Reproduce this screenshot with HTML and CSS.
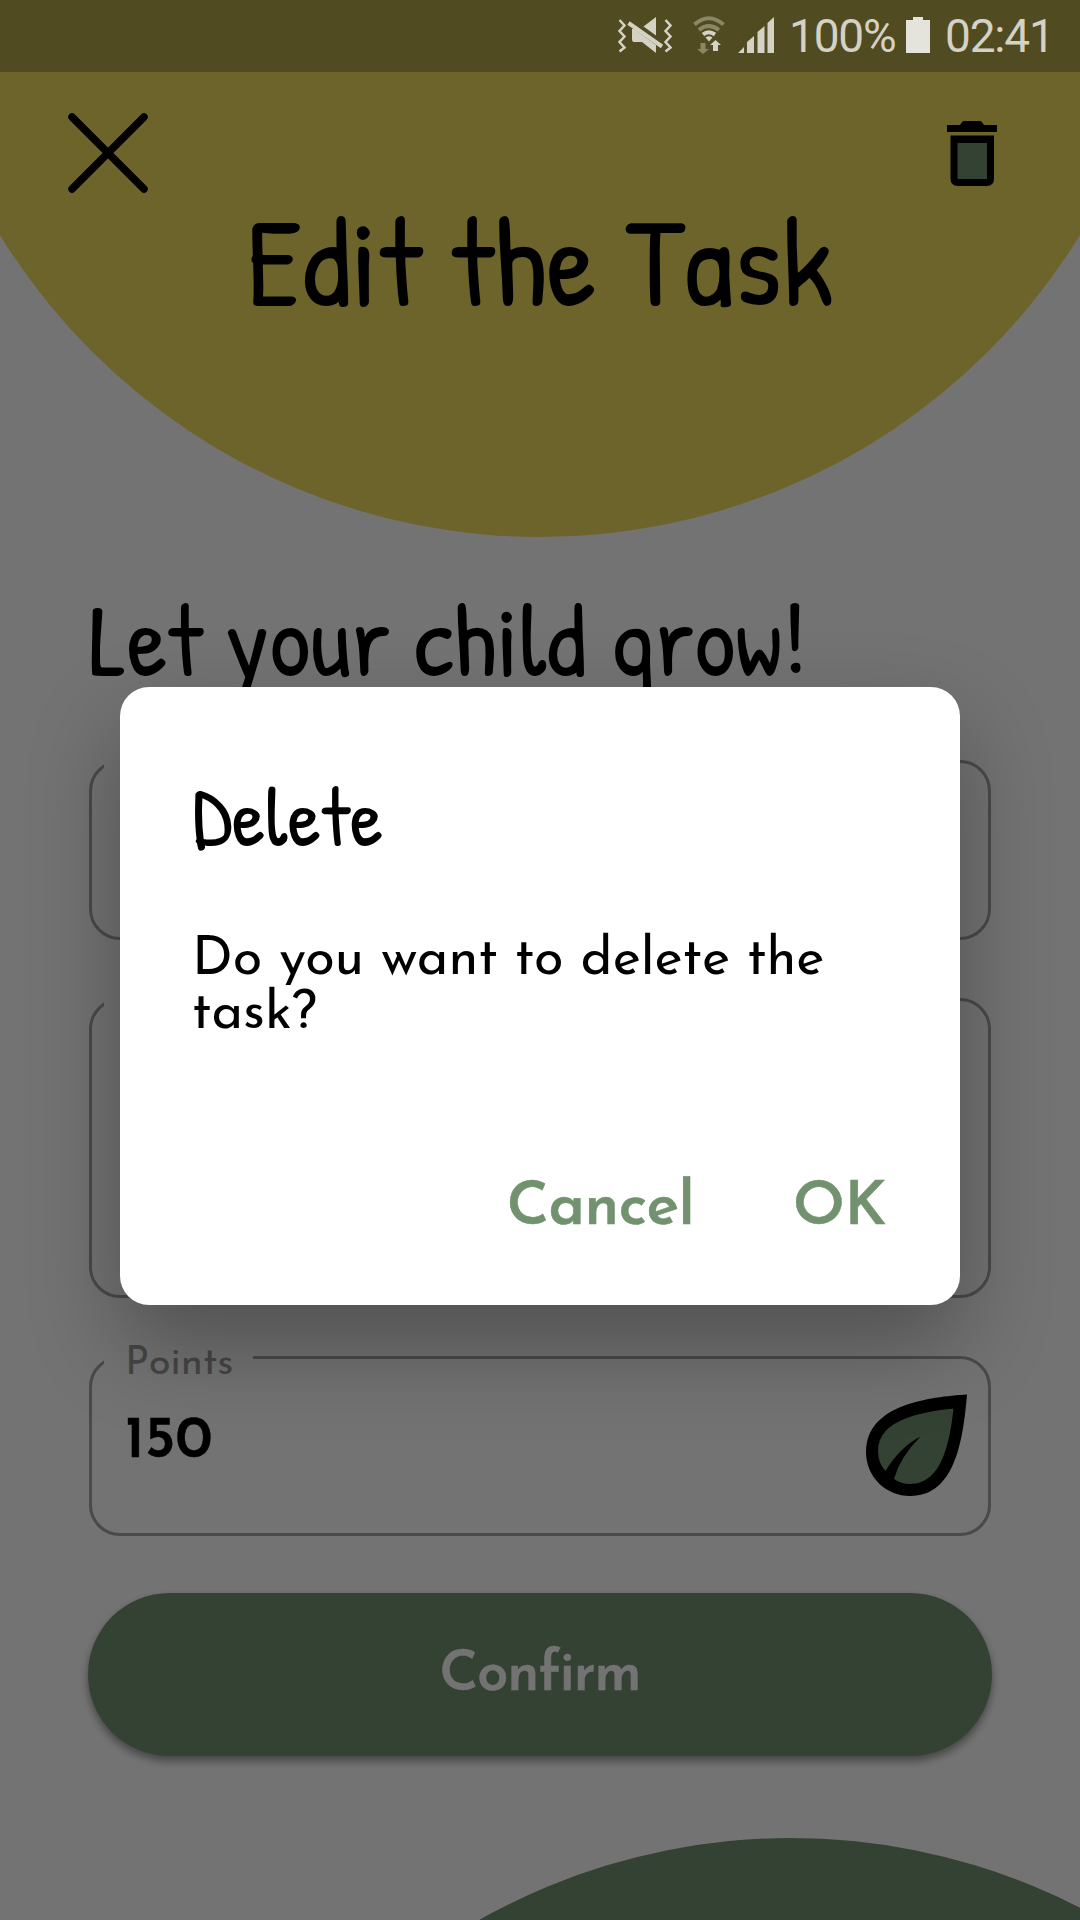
FILE: index.html
```html
<!DOCTYPE html>
<html lang="en">
<head>
<meta charset="utf-8">
<title>Edit the Task</title>
<link rel="stylesheet" href="styles.css">
</head>
<body>
<div class="screen">
  <div class="circle circle-top"></div>
  <div class="circle circle-bottom"></div>

  <div class="page">
    <header class="toolbar">
      <svg class="icon-close" viewBox="0 0 80 80"><path d="M4 4 76 76M76 4 4 76"/></svg>
      <svg class="icon-trash" viewBox="0 0 50 65">
        <path d="M0 4h13l3-4h18l3 4h13v7H0z"/>
        <path d="M3.500 14.500h43.500v43q0 7.500-7.500 7.500h-28.500q-7.500 0-7.500-7.500z"/>
        <path class="leaf-green" d="M10.500 22h29.500v36H10.500z"/>
      </svg>
    </header>
    <h1 class="title">Edit the Task</h1>
    <h2 class="subtitle">Let your child grow!</h2>
    <form class="form">
      <div class="field field-name"><span class="notch"></span></div>
      <div class="field field-details"><span class="notch"></span></div>
      <div class="field field-points">
        <span class="notch"><span class="label">Points</span></span>
        <span class="value">150</span>
        <svg class="icon-leaf" viewBox="866 1394 102 102">
          <path d="M967 1394.500C930 1397 866 1404 866 1452C866 1477 886 1496 910 1496C955 1496 963 1440 967 1394.500z"/>
          <path class="leaf-green" d="M953.500 1408.500C920 1412 878 1420 878 1451Q878 1463 885.500 1471Q900 1447 920.500 1436.500Q900 1457 894 1479Q901 1484 910 1484C943 1484 950 1440 953.500 1408.500z"/>
        </svg>
      </div>
      <button class="confirm" type="button">Confirm</button>
    </form>
  </div>

  <div class="scrim">
    <section class="dialog">
      <h3 class="dialog-title">Delete</h3>
      <p class="dialog-text">Do you want to delete the task?</p>
      <div class="dialog-actions">
        <span class="action action-cancel">Cancel</span>
        <span class="action action-ok">OK</span>
      </div>
    </section>
  </div>

  <div class="status">
    <svg class="icon-mute" viewBox="0 0 54 36">
      <path class="wave" d="M1.500 3l5 5.500-5 5.500 5 5.500-5 5.500 5 5.500-5 4M47.500 3l5 5.500-5 5.500 5 5.500-5 5.500 5 5.500-5 4"/>
      <path d="M38 0v18.500L25.500 9.500zM14 12h2l22 16v8L24 25h-8q-2 0-2-3z"/>
      <path class="slash" d="M10.500 6 44 29.500"/>
    </svg>
    <svg class="icon-wifi" viewBox="0 0 32 38">
      <path class="arc dim" d="M1.500 8.500q14-12.500 29 0M6 14q9.500-8 20 0"/>
      <path class="arc" d="M10 18.500q5.500-4.500 12 0"/>
      <path d="M12.500 21.500q3.500-2.500 7 0L16 25.500z"/>
      <path class="dim-fill" d="M7.500 27h5v6H16l-6 5-6-5h3.500z"/>
      <path d="M20 35h5v-6h3l-5.500-5-5.500 5h3z"/>
    </svg>
    <svg class="icon-signal" viewBox="0 0 36 36"><path d="M0 36l6-6v6zM9 36V25l7-6v17zM19.500 36V15l7-6v27zM29.500 36V6l6.500-6v36z"/></svg>
    <span class="battery-level">100%</span>
    <svg class="icon-battery" viewBox="0 0 24 36"><path d="M7 0h10v3h7v33H0V3h7z"/></svg>
    <span class="clock">02:41</span>
  </div>
</div>
</body>
</html>
```

FILE: styles.css
```css
* { box-sizing: border-box; }
body { margin: 0; }
h1, h2, h3, p { margin: 0; font-weight: 400; }
svg { display: block; flex: none; }

.screen {
  position: relative;
  width: 1080px;
  height: 1920px;
  overflow: hidden;
  background: #fff;
  color: #000;
  font-family: "Josefin Sans", Lato, sans-serif;
}

.circle { position: absolute; width: 1268px; height: 1268px; border-radius: 50%; }
.circle-top { left: -94px; top: -731px; background: #f1de5f; }
.circle-bottom { left: 157px; top: 1838px; background: #739273; }

.page { position: relative; padding: 72px 89px 0; }

.toolbar { display: flex; justify-content: space-between; height: 118px; margin: 0 -6px 0 -21px; }
.icon-close { width: 80px; height: 80px; margin-top: 41px; fill: none; stroke: #000; stroke-width: 7.5; stroke-linecap: round; }
.icon-trash { width: 50px; height: 65px; margin-top: 49px; }
.leaf-green { fill: #739273; }

.title, .subtitle, .dialog-title { font-family: "Patrick Hand", Lato, sans-serif; white-space: nowrap; }
.title { text-align: center; font-size: 125.5px; line-height: 140px; }
.subtitle { margin-top: 254px; font-size: 102px; line-height: 110px; }

.form { display: flex; flex-direction: column; margin-top: 66px; }
.field { position: relative; height: 180px; border: 3px solid #a4a4a4; border-radius: 31px; }
.field-details { height: 300px; margin-top: 58px; }
.field-points { display: flex; justify-content: space-between; margin-top: 58px; padding: 50px 20px 0 33px; }
.notch { position: absolute; left: 12px; top: -4px; width: 149px; height: 20px; background: #fff; }
.label { position: absolute; left: 21px; top: -16px; color: #9b9b9b; font-size: 40px; line-height: 50px; }
.value { font-size: 59px; line-height: 68px; font-weight: 600; -webkit-text-stroke: .5px #000; }
.icon-leaf { width: 102px; height: 102px; margin-top: -15px; }

.confirm {
  height: 163px;
  margin: 57px -1px 0;
  padding: 2px 0 0;
  border: 0;
  border-radius: 82px;
  background: #739273;
  box-shadow: 0 5px 8px rgba(0, 0, 0, .4);
  color: #fff;
  font: 600 56px "Josefin Sans", Lato, sans-serif;
  letter-spacing: -1px;
  -webkit-text-stroke: .5px #fff;
}

.scrim { position: absolute; inset: 0; padding: 687px 120px 0; background: rgba(0, 0, 0, .549); }
.dialog {
  height: 618px;
  padding: 83px 74px 0 72px;
  border-radius: 29px;
  background: #fff;
  box-shadow: 0 40px 90px rgba(0, 0, 0, .3);
}
.dialog-title { font-size: 84px; line-height: 90px; }
.dialog-text { margin-top: 74px; font-size: 54px; line-height: 54px; }
.dialog-actions { display: flex; justify-content: flex-end; margin-top: 131px; gap: 98.5px; color: #72926f; }
.action { font-size: 61px; line-height: 72px; font-weight: 600; letter-spacing: -.5px; -webkit-text-stroke: .5px #72926f; }

.status {
  position: absolute;
  inset: 0 0 auto;
  display: flex;
  height: 72px;
  padding: 17px 0 0 618px;
  background: #514b21;
  color: #d3d2c5;
  fill: #d3d2c5;
  font: 46px/54px Roboto, sans-serif;
  letter-spacing: -1.2px;
}
.icon-mute { width: 54px; height: 36px; }
.wave { fill: none; stroke: #d3d2c5; stroke-width: 2.5; }
.slash { fill: none; stroke: #d3d2c5; stroke-width: 4; }
.icon-wifi { width: 32px; height: 38px; margin: -1px 0 0 21px; }
.arc { fill: none; stroke: #d3d2c5; stroke-width: 4; }
.arc.dim { stroke: #8b8665; }
.dim-fill { fill: #8b8665; }
.icon-signal { width: 36px; height: 36px; margin-left: 13px; }
.battery-level { width: 117px; margin: -8px 0 0 15px; }
.icon-battery { width: 24px; height: 36px; fill: #e5e4dc; }
.clock { margin: -8px 0 0 15px; }
```
